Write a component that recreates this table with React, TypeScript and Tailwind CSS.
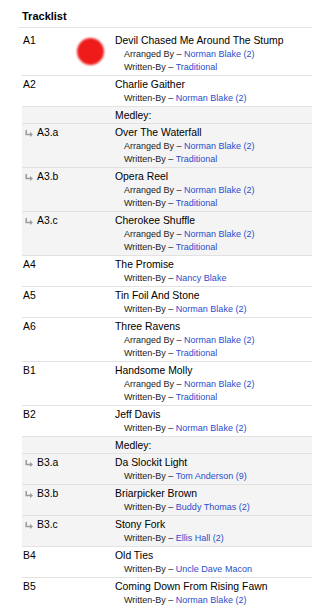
import React from "react";

type Credit = { role: string; name: string };
type Row =
  | { kind: "track"; pos: string; sub?: boolean; title: string; credits: Credit[] }
  | { kind: "heading"; title: string };

const AB = (n: string): Credit => ({ role: "Arranged By", name: n });
const WB = (n: string): Credit => ({ role: "Written-By", name: n });
const NB = "Norman Blake (2)";

const rows: Row[] = [
  { kind: "track", pos: "A1", title: "Devil Chased Me Around The Stump", credits: [AB(NB), WB("Traditional")] },
  { kind: "track", pos: "A2", title: "Charlie Gaither", credits: [WB(NB)] },
  { kind: "heading", title: "Medley:" },
  { kind: "track", pos: "A3.a", sub: true, title: "Over The Waterfall", credits: [AB(NB), WB("Traditional")] },
  { kind: "track", pos: "A3.b", sub: true, title: "Opera Reel", credits: [AB(NB), WB("Traditional")] },
  { kind: "track", pos: "A3.c", sub: true, title: "Cherokee Shuffle", credits: [AB(NB), WB("Traditional")] },
  { kind: "track", pos: "A4", title: "The Promise", credits: [WB("Nancy Blake")] },
  { kind: "track", pos: "A5", title: "Tin Foil And Stone", credits: [WB(NB)] },
  { kind: "track", pos: "A6", title: "Three Ravens", credits: [AB(NB), WB("Traditional")] },
  { kind: "track", pos: "B1", title: "Handsome Molly", credits: [AB(NB), WB("Traditional")] },
  { kind: "track", pos: "B2", title: "Jeff Davis", credits: [WB(NB)] },
  { kind: "heading", title: "Medley:" },
  { kind: "track", pos: "B3.a", sub: true, title: "Da Slockit Light", credits: [WB("Tom Anderson (9)")] },
  { kind: "track", pos: "B3.b", sub: true, title: "Briarpicker Brown", credits: [WB("Buddy Thomas (2)")] },
  { kind: "track", pos: "B3.c", sub: true, title: "Stony Fork", credits: [WB("Ellis Hall (2)")] },
  { kind: "track", pos: "B4", title: "Old Ties", credits: [WB("Uncle Dave Macon")] },
  { kind: "track", pos: "B5", title: "Coming Down From Rising Fawn", credits: [WB(NB)] },
];

function SubArrow() {
  return (
    <svg width="8" height="7" viewBox="0 0 8 7" className="shrink-0 mt-[5px]">
      <path d="M1.2 0 V4.5 H6" fill="none" stroke="#9a9a9a" strokeWidth="1.5" />
      <path d="M5 2 L8 4.5 L5 7 Z" fill="#9a9a9a" />
    </svg>
  );
}

export default function App() {
  return (
    <div className="relative w-[312px] min-h-[614px] bg-white pl-[18px] text-black font-['Liberation_Sans',Arial,sans-serif]">
      <h2 className="pl-[4px] pt-[9px] pb-[4px] leading-[14px] text-[11px] font-bold border-b border-[#e4e4e4]">
        Tracklist
      </h2>
      <div className="ml-[4px]">
        {rows.map((r, i) => {
          const first = i === 0;
          if (r.kind === "heading") {
            return (
              <div key={i} className="flex border-t border-[#e2e2e2] bg-[#f4f4f4] pt-[1px]">
                <div className="w-[93px] shrink-0" />
                <div className="text-[10.4px] leading-[15px]">{r.title}</div>
              </div>
            );
          }
          return (
            <div
              key={i}
              className={
                "flex pb-[1px] " +
                (first ? "pt-[5px] " : "pt-[1px] border-t border-[#e2e2e2] ") +
                (r.sub ? "bg-[#f4f4f4]" : "bg-white")
              }
            >
              <div className="w-[93px] shrink-0 flex items-start text-[10.4px] leading-[15px]">
                {r.sub ? (
                  <div className="flex items-start pl-[3px] gap-[4px]">
                    <SubArrow />
                    <span>{r.pos}</span>
                  </div>
                ) : (
                  <span className="pl-[1px]">{r.pos}</span>
                )}
              </div>
              <div className="flex-1 min-w-0">
                <div className="text-[10.4px] leading-[15px]">{r.title}</div>
                {r.credits.map((c, j) => (
                  <div key={j} className="pl-[9px] text-[9px] leading-[13px] text-[#222]">
                    {c.role} – <span className="text-[#2a4ecb]">{c.name}</span>
                  </div>
                ))}
              </div>
            </div>
          );
        })}
      </div>
      <div className="absolute left-[77px] top-[38px] w-[27px] h-[27px] rounded-full bg-[#ef1b1b] blur-[1px]" />
    </div>
  );
}
